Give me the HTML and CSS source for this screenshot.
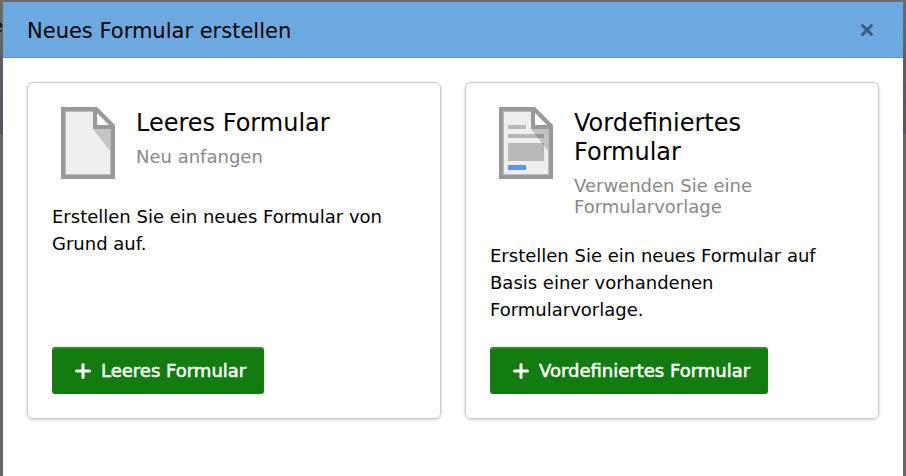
FILE: index.html
```html
<!DOCTYPE html>
<html lang="de">
	<head>
		<meta charset="utf-8">
		<title>Neues Formular erstellen</title>
		<link rel="stylesheet" href="styles.css">
	</head>
	<body>
		<div class="backdrop-text" aria-hidden="true">e</div>
		<div class="modal" role="dialog" aria-labelledby="modal-title">
			<div class="modal-header">
				<h1 id="modal-title">Neues Formular erstellen</h1>
				<button class="close" type="button" aria-label="Schließen">
					<svg width="14" height="14" viewBox="0 0 14 14"><path d="M2.5 2.5L11.5 11.5M11.5 2.5L2.5 11.5"/></svg>
				</button>
			</div>
			<div class="cards">
				<div class="card">
					<div class="card-head">
						<svg class="icon" width="72" height="72" viewBox="0 0 72 72">
							<path fill="#999" d="M9 0H45L63 18V72H9Z"/>
							<path fill="#bbb" d="M13 4H41V22H59V68H13Z"/>
							<path fill="#eee" d="M14 5H41V22H58V67H14Z"/>
							<path fill="#c4c4c4" d="M41 22H58V44Z"/>
							<path fill="#fff" d="M45 6V18H57Z"/>
						</svg>
						<div class="card-title">
							<h2>Leeres Formular</h2>
							<p class="sub">Neu anfangen</p>
						</div>
					</div>
					<p class="text">Erstellen Sie ein neues Formular von Grund auf.</p>
					<button class="btn" type="button">
						<svg width="16" height="16" viewBox="0 0 16 16"><path d="M8 1.5V14.5M1.5 8H14.5"/></svg>
						Leeres Formular
					</button>
				</div>
				<div class="card">
					<div class="card-head">
						<svg class="icon" width="72" height="72" viewBox="0 0 72 72">
							<path fill="#999" d="M9 0H45L63 18V72H9Z"/>
							<path fill="#bbb" d="M13 4H41V22H59V68H13Z"/>
							<path fill="#eee" d="M14 5H41V22H58V67H14Z"/>
							<path fill="#b9b9b9" d="M18 18H36V22H18ZM18 27H54V31H18ZM18 36H54V54H18Z"/>
							<path fill="#5599ff" d="M18 58H36V63H18Z"/>
							<path fill="#000" fill-opacity=".18" d="M41 22H58V44Z"/>
							<path fill="#fff" d="M45 6V18H57Z"/>
						</svg>
						<div class="card-title">
							<h2>Vordefiniertes Formular</h2>
							<p class="sub">Verwenden Sie eine Formularvorlage</p>
						</div>
					</div>
					<p class="text">Erstellen Sie ein neues Formular auf Basis einer vorhandenen Formularvorlage.</p>
					<button class="btn" type="button">
						<svg width="16" height="16" viewBox="0 0 16 16"><path d="M8 1.5V14.5M1.5 8H14.5"/></svg>
						Vordefiniertes Formular
					</button>
				</div>
			</div>
		</div>
	</body>
</html>
```

FILE: styles.css
```css
* {
	box-sizing: border-box;
}
body {
	margin: 0;
	padding: 2px 3px 0;
	min-height: 100vh;
	display: flex;
	overflow: hidden;
	background: linear-gradient(#6b6b6b 0, #5b6066 60px, #53585e 134px, #666 134px);
	color: #000;
	font-family: "DejaVu Sans", Verdana, sans-serif;
	font-size: 18px;
	line-height: 27px;
}
h1, h2, p {
	margin: 0;
	font-weight: normal;
}
.backdrop-text {
	position: absolute;
	left: -8px;
	top: 12px;
}
.modal {
	position: relative;
	flex: 1;
	background: #fff;
	border-radius: 2px 2px 0 0;
}
.modal-header {
	display: flex;
	align-items: center;
	justify-content: space-between;
	height: 56px;
	padding: 0 24px;
	background: #6ca9e0;
	border-bottom: 1px solid #5c96cd;
	border-radius: 2px 2px 0 0;
}
.modal-header h1 {
	padding-top: 4px;
	font-size: 21px;
}
.close {
	display: flex;
	padding: 5px;
	border: 0;
	background: none;
	cursor: pointer;
}
.close path {
	fill: none;
	stroke: #3c5e7e;
	stroke-width: 3;
	stroke-linecap: round;
}
.cards {
	display: grid;
	grid-template-columns: 1fr 1fr;
	gap: 24px;
	padding: 24px;
}
.card {
	display: flex;
	flex-direction: column;
	align-items: flex-start;
	padding: 24px;
	border: 1px solid #ccc;
	border-radius: 6px;
	box-shadow: 0 1px 3px rgba(0, 0, 0, 0.2);
}
.card-head {
	display: flex;
	gap: 12px;
	margin-bottom: 24px;
}
.icon {
	flex: none;
}
.card-title {
	padding: 2px 0 1px;
}
h2 {
	font-size: 24px;
	line-height: 29px;
}
.sub {
	margin-top: 8px;
	color: #888;
	line-height: 21px;
}
.text {
	margin-bottom: 24px;
}
.btn {
	display: flex;
	align-items: center;
	gap: 10px;
	height: 47px;
	margin-top: auto;
	padding: 0 18px 0 23px;
	border: 0;
	border-radius: 3px;
	background: #127c10;
	box-shadow: inset 0 2px 1px rgba(255, 255, 255, 0.12);
	color: #fff;
	font-family: inherit;
	font-size: 18px;
	-webkit-text-stroke: 0.5px #fff;
	cursor: pointer;
}
.btn path {
	fill: none;
	stroke: #fff;
	stroke-width: 3;
	stroke-linecap: round;
}
```
